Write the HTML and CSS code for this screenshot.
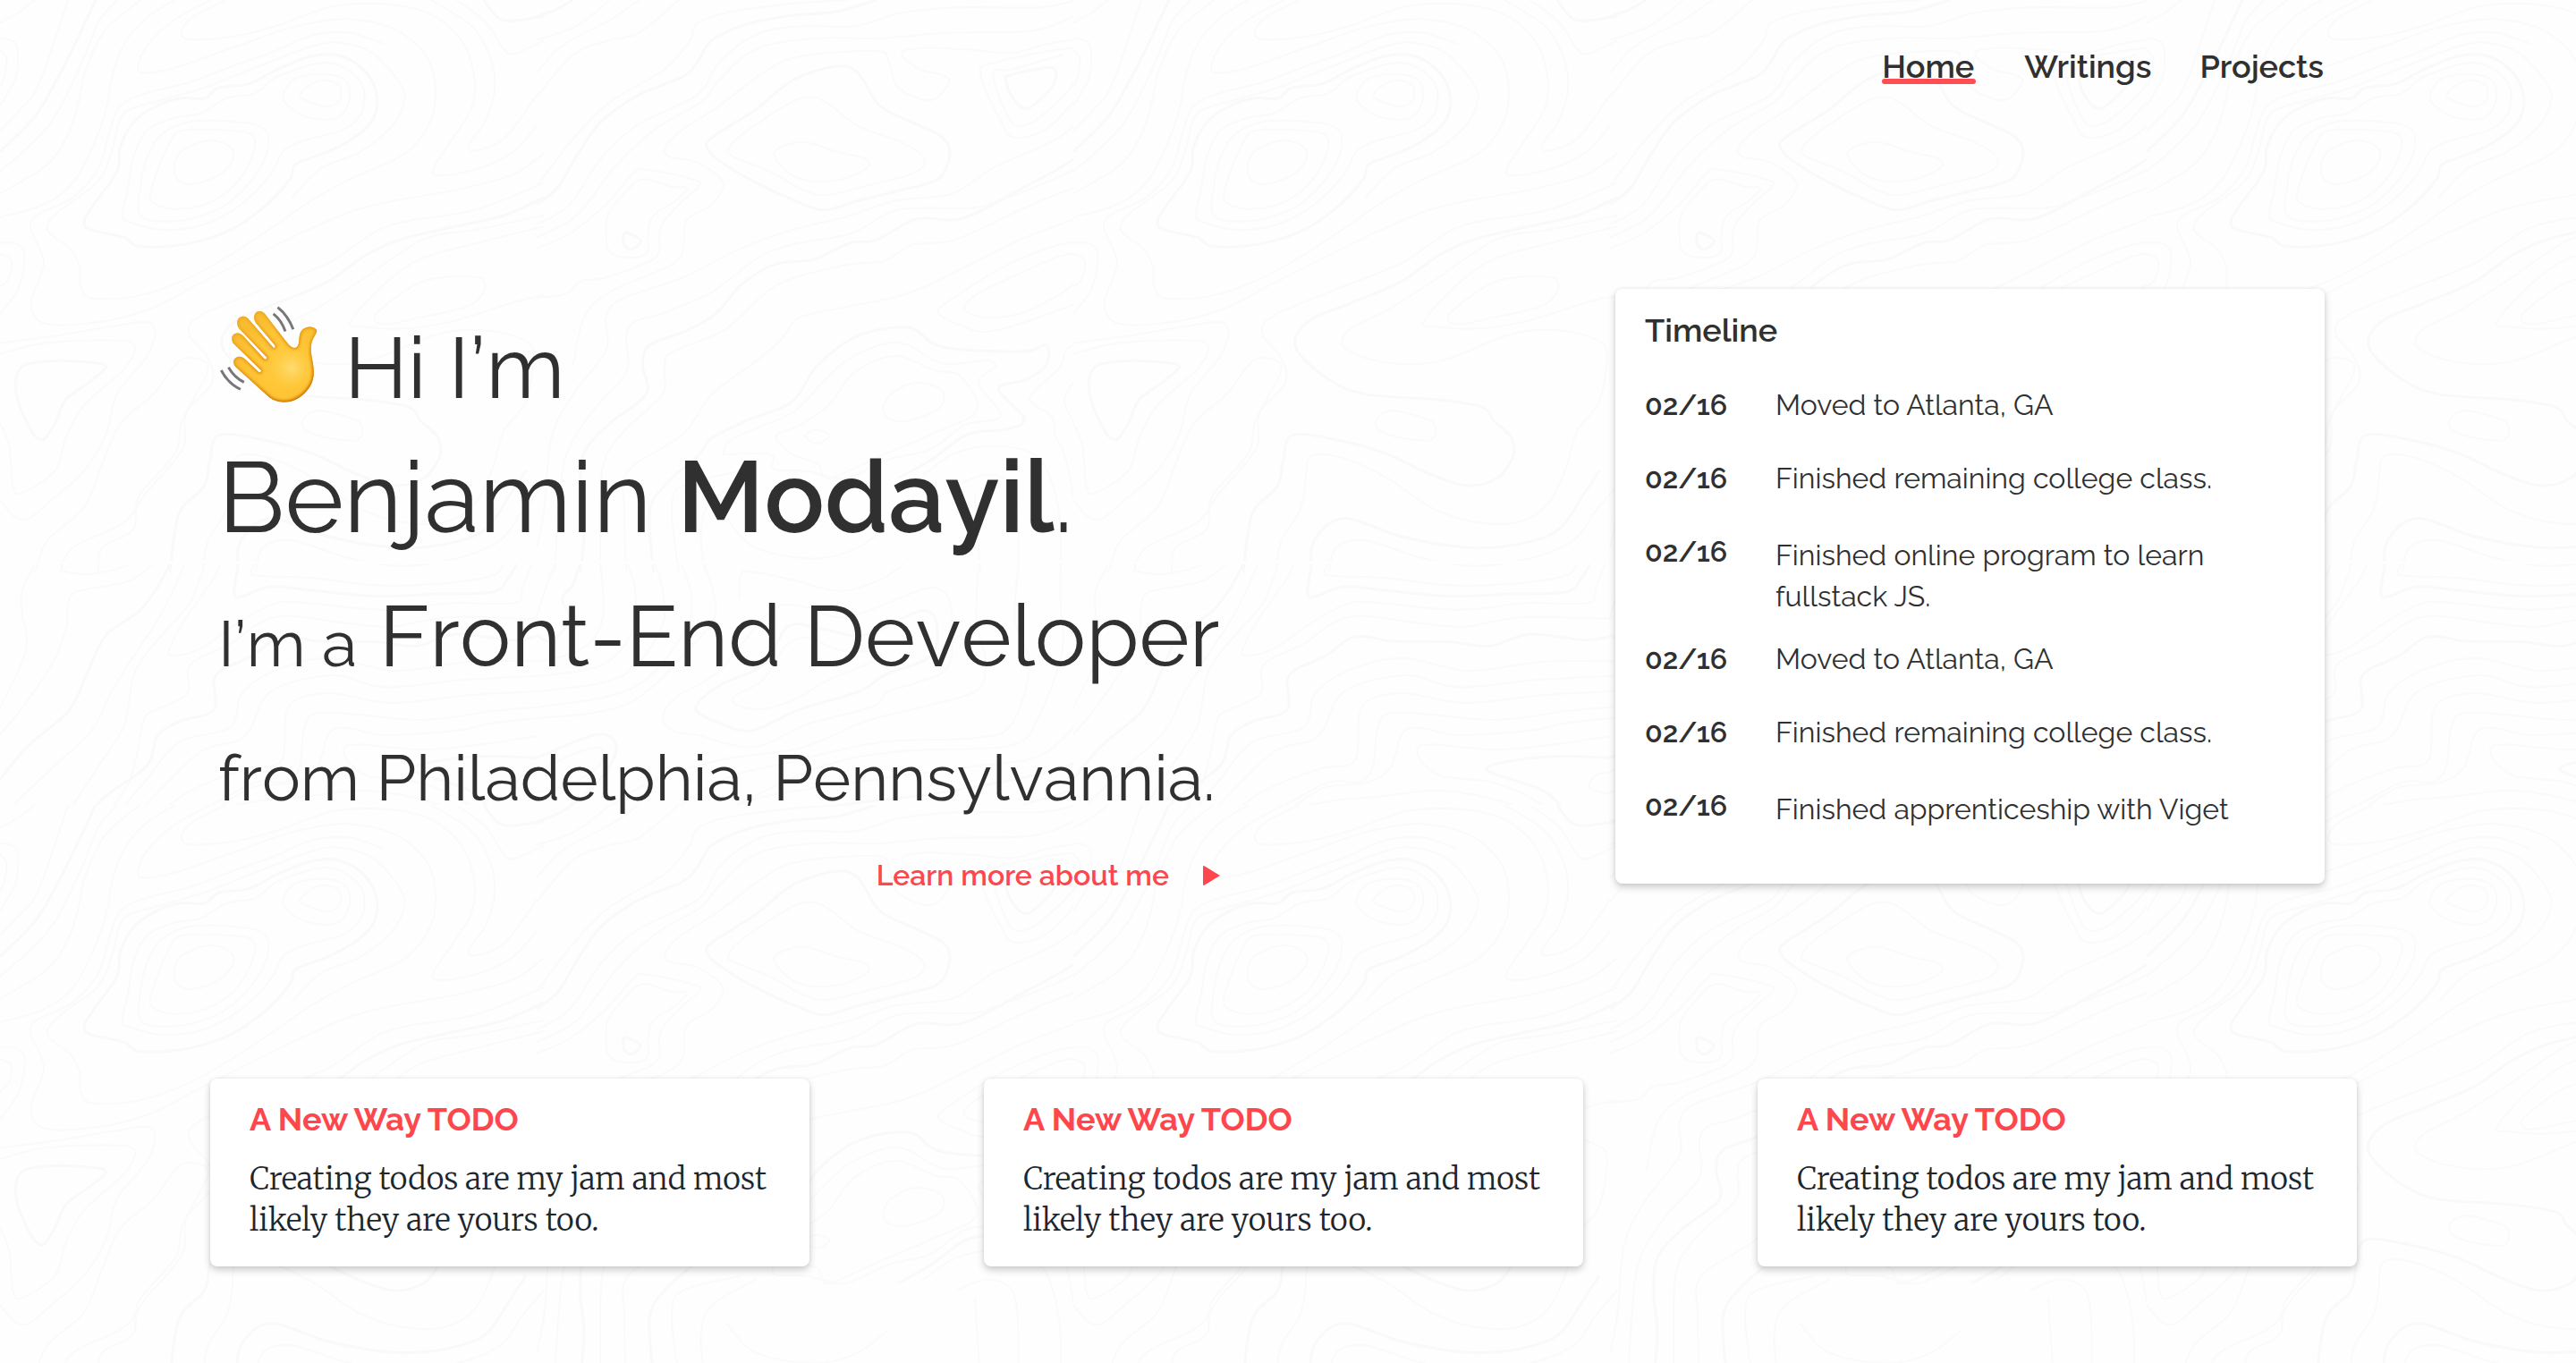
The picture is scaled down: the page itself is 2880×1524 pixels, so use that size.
FILE: index.html
```html
<!DOCTYPE html>
<html lang="en">
<head>
<meta charset="utf-8">
<meta name="viewport" content="width=device-width, initial-scale=1">
<title>Benjamin Modayil</title>
<link rel="stylesheet" href="styles.css">
</head>
<body>
<svg class="topography" aria-hidden="true">
  <defs>
    <pattern id="contours" width="1200" height="900" patternUnits="userSpaceOnUse"></pattern>
  </defs>
  <rect width="100%" height="100%" fill="url(#contours)"/>
</svg>

<div class="page">
  <header class="header">
    <nav class="nav">
      <a class="nav-link nav-link-active" href="#home">Home</a>
      <a class="nav-link" href="#writings">Writings</a>
      <a class="nav-link" href="#projects">Projects</a>
    </nav>
  </header>

  <main>
    <section class="hero">
      <div class="intro">
        <h1 class="headline">
          <span class="line"><svg class="wave" viewBox="70 60 345 336" role="img" aria-label="Waving hand">
            <defs>
              <radialGradient id="skin" gradientUnits="userSpaceOnUse" cx="290" cy="260" r="170">
                <stop offset="0" stop-color="#ffcb3f"/>
                <stop offset=".65" stop-color="#fec435"/>
                <stop offset="1" stop-color="#f9bc30"/>
              </radialGradient>
              <radialGradient id="glow" gradientUnits="userSpaceOnUse" cx="320" cy="275" r="75">
                <stop offset="0" stop-color="#ffdc73"/>
                <stop offset="1" stop-color="#ffd04a" stop-opacity="0"/>
              </radialGradient>
              <linearGradient id="rim" gradientUnits="userSpaceOnUse" x1="190" y1="130" x2="330" y2="390">
                <stop offset="0" stop-color="#eca827"/>
                <stop offset=".6" stop-color="#e0920f"/>
                <stop offset="1" stop-color="#c96f00"/>
              </linearGradient>
              <filter id="soft"><feGaussianBlur stdDeviation="5"/></filter>
              <path id="hand" d="M245 376L130 272C118 260 120 240 138 237C148 235 156 240 163 246L208 289Q218 292 216 283L124 194C112 180 115 160 130 157C140 154 148 158 156 167L228 245Q238 248 235 238L141 140C130 126 134 104 150 100C160 97 168 102 176 111L258 206Q267 208 264 198L199 122C188 106 192 85 207 82C218 80 226 86 233 95L301 184C312 198 325 212 337 204C352 194 340 165 355 147C368 131 395 131 405 144C409 150 404 158 398 168C386 188 385 205 388 228C391 252 397 268 396 295C395 325 380 350 355 370C320 398 275 398 245 376Z"/>
              <clipPath id="hand-clip"><use href="#hand"/></clipPath>
            </defs>
            <use href="#hand" fill="url(#skin)"/>
            <ellipse cx="320" cy="275" rx="75" ry="75" fill="url(#glow)"/>
            <g clip-path="url(#hand-clip)">
              <use href="#hand" fill="none" stroke="url(#rim)" stroke-width="11" filter="url(#soft)"/>
              <use href="#hand" fill="none" stroke="url(#rim)" stroke-width="2"/>
            </g>
            <g fill="none" stroke="#777" stroke-width="9">
              <path d="M273 68Q308 96 326 143"/><path d="M258 90Q286 112 299 150"/>
              <path d="M80 283Q103 328 146 348"/><path d="M105 273Q124 307 158 324"/>
            </g>
          </svg>Hi I’m</span>
          <span class="line"><span class="name">Benjamin <strong>Modayil</strong>.</span></span>
          <span class="line"><span class="small">I’m a</span> Front-End Developer</span>
          <span class="line"><span class="small">from Philadelphia, Pennsylvannia.</span></span>
        </h1>
        <a class="more" href="#about">Learn more about me
          <svg class="more-arrow" viewBox="0 0 19 22" aria-hidden="true"><path d="M1 0L19 11L1 22Q0 22 0 21V1Q0 0 1 0Z" fill="currentColor"/></svg>
        </a>
      </div>

      <section class="card timeline">
        <h2 class="timeline-title">Timeline</h2>
        <ol class="events">
          <li class="event"><time class="date">02/16</time><span>Moved to Atlanta, GA</span></li>
          <li class="event"><time class="date">02/16</time><span>Finished remaining college class.</span></li>
          <li class="event event-tall"><time class="date">02/16</time><span class="tall-text">Finished online program to learn fullstack JS.</span></li>
          <li class="event"><time class="date">02/16</time><span>Moved to Atlanta, GA</span></li>
          <li class="event"><time class="date">02/16</time><span>Finished remaining college class.</span></li>
          <li class="event event-tall"><time class="date">02/16</time><span class="tall-text">Finished apprenticeship with Viget</span></li>
        </ol>
      </section>
    </section>

    <section class="projects">
      <article class="card project">
        <h2 class="project-title">A New Way TODO</h2>
        <p class="project-text">Creating todos are my jam and most likely they are yours too.</p>
      </article>
      <article class="card project">
        <h2 class="project-title">A New Way TODO</h2>
        <p class="project-text">Creating todos are my jam and most likely they are yours too.</p>
      </article>
      <article class="card project">
        <h2 class="project-title">A New Way TODO</h2>
        <p class="project-text">Creating todos are my jam and most likely they are yours too.</p>
      </article>
    </section>
  </main>
</div>
<script src="contours.js"></script>
</body>
</html>
```
FILE: styles.css
```css
* { box-sizing: border-box; }

body {
  margin: 0;
  min-height: 100vh;
  position: relative;
  background: #fefefe;
  color: #303030;
  font-family: Raleway, Lato, "Open Sans", sans-serif;
  font-size: 32px;
  line-height: 38px;
}

h1, h2, p, ol { margin: 0; padding: 0; font-weight: 400; }
a { color: inherit; text-decoration: none; }

/* map lines behind the page */
.topography {
  position: absolute;
  inset: 0;
  width: 100%;
  height: 100%;
  z-index: -1;
}
.contour { fill: none; stroke: #fafafa; stroke-width: 2; vector-effect: non-scaling-stroke; }
.contour-bold { stroke: #f9f9f9; stroke-width: 3; }

.page { padding: 53px 245px 64px 235px; }

.header { display: flex; justify-content: flex-end; padding-right: 37px; }
.nav { display: flex; gap: 54px; font-size: 36px; line-height: 42px; font-weight: 600; }
.nav-link { position: relative; }
.nav-link-active { padding-right: 2px; }
.nav-link-active::after {
  content: "";
  position: absolute;
  left: 0;
  right: 0;
  bottom: 1px;
  height: 6px;
  border-radius: 3px;
  background: #fd4f53;
}

.hero {
  display: grid;
  grid-template-columns: minmax(0, 1120px) minmax(0, 793px);
  justify-content: space-between;
  align-items: start;
  margin: 228px 36px 208px 9px;
}
.intro { display: flex; flex-direction: column; padding-top: 13px; }
.headline { font-size: 96px; line-height: 150px; white-space: nowrap; font-kerning: none; }
.line { display: block; }
.name, .small, .name strong { line-height: 1; }
.name { font-size: 112px; }
.name strong { font-weight: 600; }
.small { font-size: 72px; }
.wave { width: 113px; height: 110px; margin-right: 28px; vertical-align: -6px; }

.more {
  display: flex;
  align-self: flex-end;
  align-items: center;
  gap: 38px;
  margin-top: 24px;
  color: #fd474d;
  font-weight: 600;
}
.more-arrow { width: 19px; height: 22px; }

.card {
  background: #fff;
  border-radius: 8px;
  box-shadow: 0 4px 8px rgba(0, 0, 0, .2), 0 0 4px rgba(0, 0, 0, .06);
}

.timeline { padding: 25px 33px 32px; }
.timeline-title { margin-bottom: 44px; font-size: 36px; line-height: 42px; font-weight: 600; }
.events { list-style: none; }
.event { display: grid; grid-template-columns: 146px minmax(0, 1fr); padding-bottom: 44px; }
.event-tall { padding-bottom: 28px; }
.tall-text { line-height: 46px; }
.date { font-weight: 600; }

.projects { display: grid; grid-template-columns: repeat(3, minmax(0, 1fr)); gap: 195px; }
.project { padding: 24px 44px 29px; }
.project-title { margin-bottom: 23px; color: #fd474d; font-size: 36px; line-height: 42px; font-weight: 700; }
.project-text { color: #1d262d; font-family: Merriweather, "Noto Serif", "DejaVu Serif", serif; font-size: 34px; font-weight: 300; line-height: 46px; }
```
FILE: contours.js
```js
// Contour lines of the 1200x900 background tile, one sheet per map quadrant.
// Each line is a flat list of x,y points; "b" marks a bold line, "c" a closed one.
const sheets = [
  { at: "scale(.4082)", lines: [
    ["b", 262,0,215,100,160,210,95,320,0,415],
    ["", 186,0,150,110,100,245,55,300,0,357],
    ["", 320,0,270,60,225,170,150,320,80,400,0,470],
    ["", 385,0,290,80,235,190,215,280,190,360,130,450,0,530],
    ["", 0,105,40,115,50,160,40,220,0,290],
    ["", 0,135,18,160,12,210,0,238],
    ["", 95,0,50,35,0,62],
    ["", 0,595,120,560,200,500,255,400,290,300,310,200,340,120,400,50,480,0],
    ["", 1490,420,1400,480,1250,520,1080,550,960,580,800,650,560,770,400,850,250,885,120,885,85,830,120,720,85,630,100,590,200,540,270,460,300,360,330,290,400,255,520,225,640,180,740,145,860,95,960,90,1050,120],
    ["", 575,0,470,60,400,130,377,185,400,200,480,185,640,130,800,75,950,52,1080,80,1165,150,1192,230,1180,330,1110,420,960,490,860,545,720,640,560,740,400,805,260,818,222,790,218,730,190,680,130,630,160,580,270,495,310,400,340,310,440,275,560,240,700,185,860,125,940,118,1020,145,1090,220,1108,275,1070,350,980,420,880,460,800,540],
    ["", 1470,345,1400,420,1300,465,1200,480,1190,455,1240,380,1290,300,1300,220,1270,120,1200,50,1120,20,1010,10,900,20,760,70,640,100,520,108,498,85,530,45,620,0],
    ["", 1470,260,1380,380,1300,413,1285,395,1330,330,1355,240,1340,150,1290,70,1180,0],
    ["b", 1325,0,1360,45,1400,57,1490,45],
    ["", 1250,0,1330,60,1380,135,1410,147,1490,110],
    ["bc", 230,610,250,570,320,470,330,400,370,330,440,285,500,268,560,270,600,240,680,230,760,190,850,155,920,150,990,185,1030,250,1025,320,980,370,900,415,810,450,795,490,720,570,620,635,500,670,380,675,340,650,250,630],
    ["c", 335,590,350,520,365,430,400,360,470,325,550,310,620,270,700,255,760,210,880,172,950,190,995,240,990,310,940,355,850,380,780,410,740,480,660,560,560,615,450,630,360,610],
    ["c", 400,440,440,370,520,333,640,333,720,350,735,400,700,480,620,560,520,600,420,605,380,580,385,510],
    ["c", 415,550,420,500,460,400,500,358,640,358,695,375,690,430,640,510,560,560,470,572],
    ["c", 480,480,490,420,560,387,620,395,640,430,600,480,520,505],
    ["c", 775,260,810,215,890,203,950,225,955,280,920,325,840,320,790,290],
    ["c", 822,260,870,222,925,230,932,270,900,292,850,280],
    ["b", 1490,540,1380,590,1250,620,1100,655,1000,700,900,770,760,830,660,870,610,920,620,970,700,1040,800,1080,1000,1095,1120,1115,1150,1150,1200,1200,1205,1250,1160,1310,1080,1330,980,1300,850,1240,720,1205,600,1192,575,1260,560,1330,500,1390,480,1450,465,1568],
    ["", 1490,500,1300,575,1060,620,900,720,700,800,540,870,520,920,570,980,580,1050,510,1130,500,1230,400,1350,340,1430,200,1500,165,1568],
    ["", 1490,590,1300,630,1160,655,1000,760,860,850,760,900,740,950,840,990,1000,990,1200,915,1330,905,1430,930,1462,970,1440,1100,1380,1180,1350,1280,1300,1380,1220,1430,1100,1430,980,1390,860,1310,740,1255,650,1250,635,1330,620,1400,570,1480,555,1568],
    ["", 1490,620,1290,670,1150,710,1050,780,960,880,990,895,1100,900,1240,880,1400,830,1490,808],
    ["c", 1030,880,1040,850,1160,770,1300,758,1328,785,1290,835,1150,870,1060,888],
    ["c", 830,1150,870,1125,960,1145,990,1165,980,1205,900,1200,840,1180],
    ["", 0,940,150,920,300,895,400,882,425,910,400,980,320,1080,290,1190,230,1290,140,1370,80,1420,40,1415,0,1370],
    ["", 0,970,120,940,300,932,368,945,340,1010,230,1110,180,1200,150,1290,60,1350,35,1330,25,1220,0,1160],
    ["bc", 45,1080,55,1010,120,990,240,992,290,1005,240,1050,180,1095,150,1160,115,1205,80,1170],
    ["", 0,665,45,668,68,700,50,790,0,860],
    ["", 0,697,30,710,25,760,0,785],
    ["", 95,1568,130,1480,230,1390,280,1270,330,1160,420,1080,480,1000,520,980,570,1010,500,1150,480,1240,380,1360,365,1450,280,1500,270,1568],
    ["b", 650,1568,660,1480,740,1420,900,1470,1080,1500,1220,1490,1330,1450,1400,1350,1440,1290],
    ["", 700,1568,720,1500,800,1480,960,1530,1100,1550,1250,1530,1370,1480,1430,1400,1490,1330]
  ]},
  { at: "translate(600) scale(.4082)", lines: [
    ["b", 0,45,50,28,100,0],
    ["b", 0,560,60,510,120,410,180,330,280,260,400,210,440,170,480,110,580,65,700,42,820,32,930,0],
    ["", 0,110,110,70,200,0],
    ["", 0,200,70,125,200,55,280,0],
    ["", 0,265,100,150,200,110,280,90,390,0],
    ["", 0,510,100,380,200,280,350,190,420,110,440,65,520,35,700,10,850,0],
    ["", 0,615,90,560,180,430,280,340,440,260,500,170,600,95,720,72,870,72,1000,35,1150,20,1380,20,1480,0],
    ["", 0,650,110,590,220,450,330,350,450,280,500,220,600,135,760,105,940,105,1120,90,1350,85,1460,50,1568,0],
    ["", 100,1000,130,870,200,800,360,730,400,690,410,605,480,560,510,500,440,445,355,425,380,370,500,290,620,200,720,155,930,140,965,170,990,240,1080,275,1130,225,1110,205,1050,190,1000,150,1040,132,1170,135,1300,145,1400,120,1490,110,1525,150,1490,250,1400,350,1310,377,1270,330,1215,200,1260,170,1440,135,1490,145,1470,230,1380,320,1320,345,1285,310,1250,200,1300,190,1440,150],
    ["bc", 465,400,490,370,600,300,700,220,820,182,880,200,940,290,1040,340,1110,375,1132,420,1100,490,1000,520,880,550,790,575,720,555,600,500,500,440],
    ["c", 525,410,560,370,680,290,745,265,800,285,880,345,1000,390,1062,435,1030,475,900,510,790,535,720,515,640,470,540,430],
    ["c", 650,425,680,398,740,390,820,415,900,435,905,460,840,490,770,498,700,480],
    ["bc", 1285,220,1300,205,1400,185,1422,200,1410,240,1345,297,1305,270],
    ["c", 190,650,195,590,240,530,290,490,370,512,412,515,380,550,320,590,305,640,300,695,240,705,200,690],
    ["", 0,815,80,805,120,770,190,760,300,720,335,690,340,620,400,550,445,510,430,492,300,464,260,480,190,560,90,640,0,680],
    ["bc", 238,640,255,640,285,660,260,683,240,670],
    ["b", 1568,340,1480,430,1340,510,1170,597,1040,600,930,658,860,665,760,710,650,725,560,780,490,860,400,910,310,945,290,1000,300,1080,200,1160,130,1240,120,1340,130,1450,120,1568],
    ["", 1568,240,1440,370,1250,460,1140,530,980,550,860,590,700,630,560,680,400,760,230,820,190,870,190,960,100,1080,40,1200,20,1400,0,1500],
    ["", 1568,380,1460,470,1250,555,1180,570,990,575,860,640,700,670,600,710,480,800,340,860,270,880,245,920,245,1020,150,1130,80,1250,60,1400,50,1568],
    ["", 1568,480,1380,550,1150,655,1030,670,950,715,850,725,660,780,520,900,370,965,350,1010,345,1080,250,1170,190,1250,175,1350,175,1568],
    ["", 1568,570,1340,650,1040,795,850,840,720,870,670,930,600,990,480,1080,400,1190,250,1290,240,1400,245,1568],
    ["c", 1100,855,1150,810,1300,720,1460,665,1540,690,1500,810,1400,860,1240,908,1160,890],
    ["c", 1172,850,1200,810,1320,750,1440,700,1500,705,1480,770,1350,850,1240,870],
    ["b", 320,1568,310,1400,360,1320,440,1250,480,1200,580,1150,700,1100,770,1000,880,920,1020,897,1110,950,1330,963,1395,945,1395,1000,1340,1040,1265,1065,1335,1145,1290,1175,1180,1190,1080,1260,990,1310],
    ["", 510,1245,540,1200,700,1130,780,1050,860,980,990,938,1110,995,1230,988,1255,1005,1210,1050,1270,1140,1170,1165,1080,1230,960,1260,850,1310,780,1300,740,1290,650,1285,640,1245,510,1245],
    ["c", 655,1195,720,1165,800,1110,870,1020,980,975,1090,1015,1160,1030,1205,1125,1080,1190,940,1250,800,1310,770,1270,700,1245],
    ["c", 950,1130,970,1080,1040,1048,1110,1070,1100,1120,1000,1155],
    ["c", 735,1195,765,1178,802,1192,770,1215],
    ["", 1568,920,1460,950,1430,1010,1350,1090,1410,1140,1420,1190,1450,1260,1480,1400,1510,1415,1568,1380],
    ["", 1568,965,1510,975,1480,1030,1445,1100,1480,1180,1500,1320,1530,1350,1568,1320],
    ["", 1060,1300,1150,1240,1270,1222,1380,1260,1430,1400,1435,1568],
    ["", 1150,1330,1240,1300,1310,1350,1320,1568],
    ["", 1200,1350,1215,1568],
    ["", 460,1568,450,1450,480,1370,600,1300],
    ["", 390,1568,370,1400,400,1330,560,1290],
    ["", 520,1420,600,1500,760,1530,880,1500,960,1440]
  ]},
  { at: "translate(-20 610) scale(.4082 .3333)", lines: [
    ["", 145,63,110,150,110,230,120,350,50,540,0,620],
    ["", 217,50,225,85,300,95,390,70,415,50],
    ["", 470,60,400,120,260,155,235,200,230,280,190,400,100,560,0,700],
    ["b", 515,60,480,140,430,220,340,300,290,420,240,550,120,680,20,830],
    ["", 550,50,545,90,490,230,400,400,350,500,300,620,180,760,60,900],
    ["", 610,60,570,190,500,290,420,420,390,600,330,720,200,960],
    ["", 650,50,640,100,560,240,512,350,530,370,600,345,700,260,790,200,860,190,1100,215,1290,193,1460,192,1480,140,1510,50],
    ["b", 705,50,690,160,715,170,790,138,900,150,1080,170,1250,162,1400,155,1440,110,1470,50],
    ["", 755,50,735,90,760,102,900,108,1080,133,1250,128,1400,100,1430,50],
    ["", 300,960,400,800,440,600,460,560,560,500,570,400,680,330,760,260,840,237,1000,260,1120,272,1280,240,1500,245,1518,240],
    ["b", 260,960,330,850,450,740,480,640,540,590,635,550,640,435,740,370,820,305,920,320,1080,323,1190,337,1300,297,1450,317,1518,305],
    ["", 330,960,440,800,540,660,680,610,710,500,800,420,950,377,1130,420,1330,390,1518,388],
    ["", 380,960,480,830,600,690,720,640,790,490,960,435,1100,475,1300,452,1518,438],
    ["", 430,960,560,830,720,750,820,720,840,540,950,495,1120,528,1350,500,1518,490],
    ["", 550,930,740,798,830,795,870,740,885,600,940,560,1200,585,1400,555,1518,543],
    ["", 490,960,640,880,740,810,840,800,915,750,950,630,1000,612,1100,635,1300,620,1400,595,1518,580],
    ["", 1518,640,1350,670,1200,685,1030,667,990,695,1050,770,1200,795,1320,860,1390,960],
    ["b", 1518,712,1350,708,1180,748,1340,825,1420,920,1490,930,1518,920],
    ["", 550,960,700,870,900,840,1060,822,1250,870,1340,960],
    ["", 670,960,860,895,1050,875,1220,910,1280,960],
    ["", 1518,760,1480,770,1462,810,1500,830,1518,828]
  ]},
  { at: "translate(600 610) scale(.4082 .3333)", lines: [
    ["", 50,60,20,160,0,240],
    ["b", 118,60,100,130,70,180,90,250,40,320,0,300],
    ["", 175,60,180,250,120,350,0,390],
    ["", 245,50,270,150,265,280,180,400,0,438],
    ["", 320,50,345,150,340,280,230,440,0,490],
    ["", 395,50,425,180,400,300,260,480,0,543],
    ["", 460,60,490,220,430,330,250,530,0,580],
    ["", 555,180,560,95,600,90,700,115,830,152,940,115,1020,50],
    ["b", 0,712,160,635,215,660,200,740,120,850,0,920],
    ["", 0,760,100,700,175,680,170,740,90,800,0,828],
    ["bc", 435,545,500,470,620,400,690,270,780,280,900,300,1050,220,1095,260,1080,370,960,430,880,490,720,550,590,620,500,595],
    ["c", 535,515,620,450,680,340,740,310,830,350,940,360,900,400,800,450,700,520,600,550],
    ["c", 345,580,380,510,500,420,640,220,730,205,850,240,1050,150,1110,150,1135,210,1130,400,1040,460,960,490,920,540,740,600,620,670,540,670,440,635,380,625],
    ["", 1210,60,1205,250,1230,400,1200,490,1060,540,900,590,720,680,500,720,300,800,100,960],
    ["", 1320,60,1310,250,1350,400,1300,600,1200,645,940,660,720,720,500,790,300,960],
    ["", 1435,60,1435,200,1440,350,1380,560,1300,670,1000,690,760,750,400,960],
    ["", 440,960,600,850,900,790,1200,740,1400,690,1568,460],
    ["b", 560,960,700,900,900,860,1100,830,1400,760,1568,680],
    ["", 700,960,1000,950,1300,880,1568,780]
  ]}
];

// Catmull-Rom spline through the points, written as cubic Béziers
function spline(points, closed) {
  const n = points.length;
  const at = i => closed ? points[(i + n) % n] : points[Math.min(n - 1, Math.max(0, i))];
  let d = `M${points[0]}`;
  for (let i = 0; i < (closed ? n : n - 1); i++) {
    const [a, b, c, e] = [at(i - 1), at(i), at(i + 1), at(i + 2)];
    d += `C${b[0] + (c[0] - a[0]) / 6},${b[1] + (c[1] - a[1]) / 6} ${c[0] - (e[0] - b[0]) / 6},${c[1] - (e[1] - b[1]) / 6} ${c}`;
  }
  return d;
}

const tile = document.getElementById("contours");
const ns = "http://www.w3.org/2000/svg";
for (const sheet of sheets) {
  const group = document.createElementNS(ns, "g");
  group.setAttribute("transform", sheet.at);
  for (const [kind, ...flat] of sheet.lines) {
    const points = [];
    for (let i = 0; i < flat.length; i += 2) points.push([flat[i], flat[i + 1]]);
    const path = document.createElementNS(ns, "path");
    path.setAttribute("class", kind.includes("b") ? "contour contour-bold" : "contour");
    path.setAttribute("d", spline(points, kind.includes("c")));
    group.append(path);
  }
  tile.append(group);
}

// blank strip where the tile rows meet
const seam = document.createElementNS(ns, "rect");
for (const [name, value] of Object.entries({ y: 627, width: 1200, height: 4, fill: "#fefefe" })) seam.setAttribute(name, value);
tile.append(seam);
```
